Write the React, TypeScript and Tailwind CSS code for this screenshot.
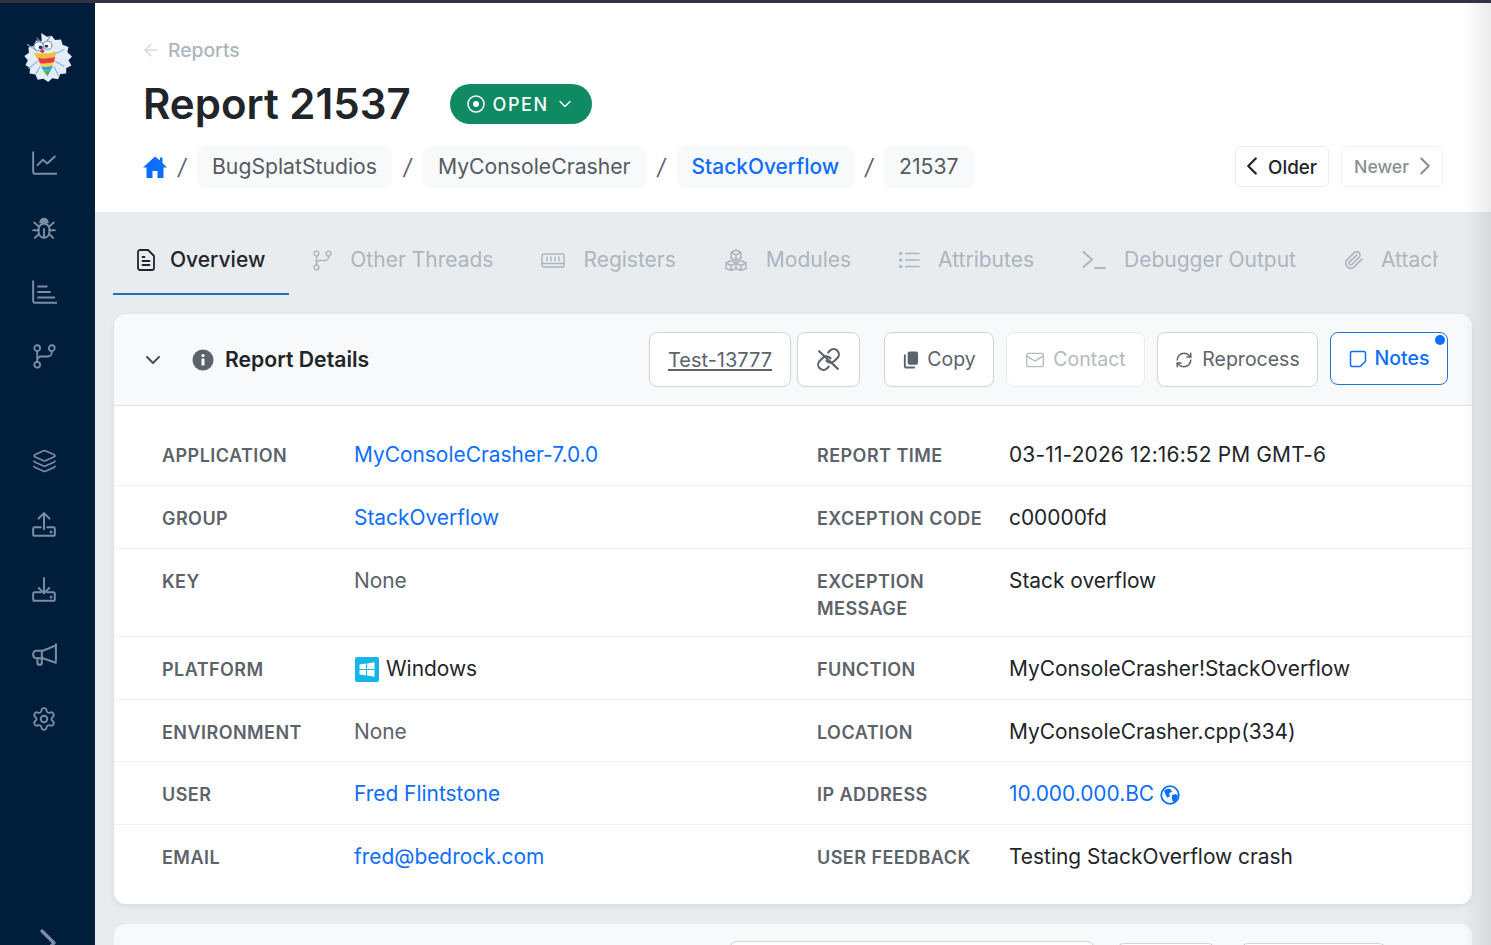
import React from "react";
import { ArrowLeft, ChevronDown, ChevronRight, ChevronLeft, Mail, RefreshCw, Layers, Settings } from "lucide-react";

const Svg = ({ children, size = 24, w, h, box = "0 0 24 24", sw = 1.8, className = "" }: { children: React.ReactNode; size?: number; w?: number; h?: number; box?: string; sw?: number; className?: string }) => (
  <svg width={w ?? size} height={h ?? size} viewBox={box} fill="none" stroke="currentColor" strokeWidth={sw} strokeLinecap="round" strokeLinejoin="round" className={`shrink-0 ${className}`}>
    {children}
  </svg>
);

const Logo = () => (
  <svg width="50" height="50" viewBox="3.500 0.500 43 47" preserveAspectRatio="none">
    <path d="M20 1.500l5 3.500 4-1 3 4 5-.5 1.500 5 5 2-1 5 4 4-3 3.500 2.500 5-4.500 2.500 0 5-5 .5-2 5-5-1-3.500 3.500-4-3-5 1-2-5-5-1 .5-5-4-3 2-4.500-3-4 4-3-.5-5 5-1.500 1.500-5 5 .5z" fill="#e2edf8" />
    <path d="M8 12l8 6M40 17l-8 4M9 35l8-7M40 33l-8-5M15 41l4-8M35 42l-4-9" stroke="#8fb0d8" strokeWidth="1" fill="none" />
    <path d="M16 6l4 4M28 4l-3 5" stroke="#7d93b8" strokeWidth="1" fill="none" />
    <circle cx="18" cy="14" r="4.200" fill="#fff" stroke="#7d93b8" strokeWidth="1" />
    <circle cx="25.500" cy="13" r="3.800" fill="#fff" stroke="#7d93b8" strokeWidth="1" />
    <circle cx="19.500" cy="15" r="1.700" fill="#22335c" />
    <circle cx="24.500" cy="14" r="1.400" fill="#22335c" />
    <circle cx="21" cy="18.500" r="1.700" fill="#e23b3b" />
    <path d="M14 20q10 2 19-1l-1 5q-8 2-16 1z" fill="#f3bd3c" />
    <path d="M17 25q8 1 15-1l-1 5q-6 2-12 1z" fill="#ec3a3a" />
    <path d="M19 30q6 1 12-1l-1 3q-5 2-10 1z" fill="#f8d53c" />
    <path d="M20 33q5 1 10-1l-1.500 4q-4 1-7 0z" fill="#2f9fe0" />
    <path d="M21.500 36.500q3 .8 7-.5l-3 6z" fill="#4cb050" />
  </svg>
);

const BugIcon = () => (
  <Svg size={26} sw={1.8}>
    <path d="M8.500 7a3.500 3.500 0 0 1 7 0z" fill="currentColor" />
    <rect x="7" y="8" width="10" height="13" rx="5" />
    <path d="M12 13v8M3 7l4 3.500M21 7l-4 3.500M2 14h5M22 14h-5M3.500 21l4-3.500M20.500 21l-4-3.500" />
  </Svg>
);

const AxisChart = () => (
  <Svg size={26} sw={1.8}>
    <path d="M2 2v18a2 2 0 0 0 2 2h20" />
    <path d="M6.500 7h8M6.500 12h11M6.500 17h15" />
  </Svg>
);

const GrowthChart = () => (
  <Svg size={26} sw={1.8}>
    <path d="M2 2v18a2 2 0 0 0 2 2h20" />
    <path d="M6 14l5-5 4 3.500 7-6.500" />
  </Svg>
);

const Branch = ({ w = 24, h = 24 }: { w?: number; h?: number }) => (
  <Svg w={w} h={h} box="1 0 22 24" sw={1.7}>
    <circle cx="5" cy="4" r="2.800" />
    <circle cx="5" cy="20" r="2.800" />
    <circle cx="19" cy="4" r="2.800" />
    <path d="M5 6.800v10.400M19 6.800v1.200a4 4 0 0 1-4 4H9a4 4 0 0 0-4 4" />
  </Svg>
);

const Tray = ({ up }: { up: boolean }) => (
  <Svg size={26} sw={1.8}>
    <path d={up ? "M12 1v15M7 6l5-5 5 5" : "M12 1v14M7 10l5 5 5-5"} />
    <path d="M9 14H3.500A1.500 1.500 0 0 0 2 15.500v5A1.500 1.500 0 0 0 3.500 22h17a1.500 1.500 0 0 0 1.500-1.500v-5a1.500 1.500 0 0 0-1.500-1.500H15" />
    <circle cx="18.500" cy="18.500" r=".5" fill="currentColor" />
  </Svg>
);

const Horn = () => (
  <Svg size={26} sw={1.9}>
    <path d="M23 3v15M23 4l-12 5H5a3 3 0 0 0-3 3v1a3 3 0 0 0 3 3h6l12 4" />
    <path d="M6 16v4a2 2 0 0 0 4 0v-4M10 9v7" />
  </Svg>
);

const SideItem = ({ children }: { children: React.ReactNode }) => (
  <div className="flex h-[26px] w-[26px] items-center justify-center text-[#7b8ea5]">{children}</div>
);

const Sidebar = () => (
  <aside className="flex h-full w-[95px] shrink-0 flex-col overflow-hidden bg-[#001d3b]">
    <div className="ml-[22px] mt-[29px] h-[50px]"><Logo /></div>
    <div className="ml-[31px] mt-[68px] flex flex-col gap-[38.500px]">
      <SideItem><GrowthChart /></SideItem>
      <SideItem><BugIcon /></SideItem>
      <SideItem><AxisChart /></SideItem>
      <SideItem><Branch w={23} h={25} /></SideItem>
    </div>
    <div className="mx-[20px] mt-[39px] h-px bg-[#1c3550]" />
    <div className="ml-[31px] mt-[39px] flex flex-col gap-[38.500px]">
      <SideItem><Layers size={28} strokeWidth={1.6} className="ml-px" /></SideItem>
      <SideItem><Tray up /></SideItem>
      <SideItem><Tray up={false} /></SideItem>
      <SideItem><Horn /></SideItem>
      <SideItem><Settings size={26} strokeWidth={1.7} /></SideItem>
    </div>
    <div className="mx-[20px] mt-[38px] h-px bg-[#1c3550]" />
    <div className="mt-[124px] h-px bg-[#10294a]" />
    <div className="ml-[24px] mt-[25px] text-[#7b8ea5]"><ChevronRight size={48} strokeWidth={1.6} /></div>
  </aside>
);

const Crumb = ({ children, blue }: { children: React.ReactNode; blue?: boolean }) => (
  <span className={`flex h-[42px] items-center rounded-lg bg-[#f8f9fa] px-[15px] ${blue ? "text-[20.900px] font-medium text-[#0d6efd]" : "text-[21.200px] text-[#545b62]"}`}>{children}</span>
);
const Sep = ({ w }: { w: string }) => <span className={`text-center text-[22px] italic text-[#5c636a] ${w}`}>/</span>;

const Header = () => (
  <header className="flex h-[209px] shrink-0 flex-col bg-white pl-[48px] pr-[48px]">
    <div className="mt-[36px] flex h-[22px] items-center gap-[7px] text-[19.300px] font-medium text-[#adb5bd]">
      <ArrowLeft size={20} strokeWidth={1.5} className="-ml-[2px] text-[#ced4da]" />
      <span>Reports</span>
    </div>
    <div className="mt-[16px] flex h-[54px] items-center">
      <h1 className="text-[42px] font-semibold leading-none text-[#212529]">Report 21537</h1>
      <button className="ml-[39px] flex h-[40px] w-[142px] items-center justify-center gap-[6px] rounded-full bg-[#0f8a63] text-[18px] font-medium tracking-[1.600px] text-white">
        <svg width="20" height="20" viewBox="0 0 20 20" fill="none" stroke="currentColor" strokeWidth="1.500"><circle cx="10" cy="10" r="8" /><circle cx="10" cy="10" r="3" fill="currentColor" stroke="none" /></svg>
        <span>OPEN</span>
        <ChevronDown size={20} strokeWidth={1.600} />
      </button>
    </div>
    <div className="mt-[15px] flex h-[42px] items-center">
      <svg width="24" height="22" viewBox="0 0 24 22" fill="#0d6efd"><path d="M12 0.500L0 11.500h3.500V22h6v-7h5v7h6V11.500H24L19.500 7V1.500H17v3z" /></svg>
      <Sep w="w-[30px]" />
      <Crumb>BugSplatStudios</Crumb>
      <Sep w="w-[31px]" />
      <Crumb>MyConsoleCrasher</Crumb>
      <Sep w="w-[31px]" />
      <Crumb blue>StackOverflow</Crumb>
      <Sep w="w-[30px]" />
      <Crumb>21537</Crumb>
      <div className="mb-[2px] ml-auto flex items-center gap-[12px]">
        <button className="flex h-[41px] w-[94px] items-center justify-start gap-px rounded-md border border-[#e9ecef] bg-white pl-px text-[18.800px] font-medium text-[#212529]"><ChevronLeft size={30} strokeWidth={1.800} /><span className="mt-[5px]">Older</span></button>
        <button className="flex h-[41px] w-[102px] items-center justify-start gap-px rounded-md border border-[#f1f3f5] bg-white pl-[12px] text-[17.700px] font-medium text-[#8a8f94]"><span className="mt-[2px]">Newer</span><ChevronRight size={30} strokeWidth={1.600} /></button>
      </div>
    </div>
  </header>
);

const TabItem = ({ icon, label, active, gap = "gap-[18px]" }: { icon: React.ReactNode; label: string; active?: boolean; gap?: string }) => (
  <div className={`flex h-[82px] shrink-0 items-center border-b-2 px-[24px] pt-[14px] text-[21px] ${gap} ${active ? "border-[#1f6fc4] font-medium text-[#212529]" : "border-transparent text-[#adb5bd]"}`}>
    {icon}
    <span>{label}</span>
  </div>
);

const Tabs = () => (
  <nav className="ml-[18px] mr-[53px] mt-[1px] flex shrink-0 overflow-hidden">
    <TabItem active label="Overview" gap="gap-[15px]" icon={<Svg w={18} h={22} box="3 1 18 22" sw={1.800}><path d="M6 2h8l6 6v12a2 2 0 0 1-2 2H6a2 2 0 0 1-2-2V4a2 2 0 0 1 2-2z" /><path d="M8.500 13h7M8.500 17h7M8.500 9h2" /></Svg>} />
    <TabItem label="Other Threads" icon={<Branch w={19} h={21} />} />
    <TabItem label="Registers" icon={<Svg w={24} h={15} box="0 0 24 15" sw={1.400}><rect x="1" y="1" width="22" height="13" rx="1.500" /><path d="M1 10.500h22M6 4v3.500M10 4v3.500M14 4v3.500M18 4v3.500" /></Svg>} />
    <TabItem label="Modules" icon={<Svg w={24} h={22} box="0 0 24 22" sw={1.500}><path d="M12 1l5 2.500v5.500l-5 2.500-5-2.500V3.500zM7 11.500l5 2.500v5.500l-5 2-5-2V14zM17 11.500l5 2.500v5.500l-5 2-5-2V14zM7 3.500l5 2.500 5-2.500M12 6v5.500M2 14l5 2.500 5-2.500 5 2.500 5-2.500M7 16.500v5M17 16.500v5" /></Svg>} />
    <TabItem label="Attributes" icon={<Svg w={21} h={18} box="0 0 21 18" sw={1.700}><path d="M7 2.500h13M7 9h13M7 15.500h13" /><path d="M1.500 2.500h.5M1.500 9h.5M1.500 15.500h.5" strokeWidth={3} /></Svg>} />
    <TabItem label="Debugger Output" icon={<Svg w={24} h={20} box="0 0 24 20" sw={2}><path d="M1.500 2l8.500 7.500-8.500 7.500M13 18h10" /></Svg>} />
    <TabItem label="Attachments" gap="gap-[17px]" icon={<Svg w={20} h={22} box="0 0 24 24" sw={2}><path d="m21.440 11.050-9.190 9.190a6 6 0 0 1-8.490-8.490l8.570-8.570A4 4 0 1 1 18 8.840l-8.590 8.570a2 2 0 0 1-2.830-2.830l8.490-8.480" /></Svg>} />
  </nav>
);

const ActionBtn = ({ children, w, tone = "border-[#ced4da] text-[#5c636a]", h = "h-[55px]" }: { children: React.ReactNode; w: string; tone?: string; h?: string }) => (
  <button className={`flex items-center justify-center rounded-lg border bg-white text-[19.500px] ${h} ${w} ${tone}`}>{children}</button>
);

const CardHeader = () => (
  <div className="flex h-[92px] items-center border-b border-[#dee2e6] bg-[#f8f9fa] pl-[27px] pr-[24px]">
    <ChevronDown size={24} strokeWidth={2} className="text-[#495057]" />
    <svg width="22" height="22" viewBox="0 0 22 22" className="ml-[27px]"><circle cx="11" cy="11" r="10.500" fill="#5c636a" /><circle cx="11" cy="6.500" r="1.600" fill="#fff" /><rect x="9.500" y="9.500" width="3" height="7" rx=".6" fill="#fff" /></svg>
    <span className="ml-[11px] mt-px text-[21.200px] font-semibold text-[#212529]">Report Details</span>
    <div className="ml-auto flex items-start">
      <ActionBtn w="w-[142px]"><span className="text-[20px] underline underline-offset-2">Test-13777</span></ActionBtn>
      <ActionBtn w="w-[63px] ml-[6px]">
        <Svg size={25} sw={2}>
          <path d="M10 13a5 5 0 0 0 7.540.54l3-3a5 5 0 0 0-7.070-7.070l-1.720 1.710" />
          <path d="M14 11a5 5 0 0 0-7.540-.54l-3 3a5 5 0 0 0 7.070 7.070l1.710-1.710" />
          <path d="M3 4l18 17" />
        </Svg>
      </ActionBtn>
      <ActionBtn w="w-[110px] ml-[24px] gap-[8px]">
        <svg width="17" height="20" viewBox="0 0 18 20" fill="currentColor"><rect x="6" y="1" width="11" height="14" rx="2" /><path d="M3 5v11a2 2 0 0 0 2 2h8" fill="none" stroke="currentColor" strokeWidth="2" strokeLinecap="round" /></svg>
        <span>Copy</span>
      </ActionBtn>
      <ActionBtn w="w-[139px] ml-[12px] gap-[8px]" tone="border-[#e9ecef] text-[#b5babf]"><Mail size={20} strokeWidth={1.600} /><span>Contact</span></ActionBtn>
      <ActionBtn w="w-[161px] ml-[12px] gap-[9px]"><RefreshCw size={18} strokeWidth={2} /><span>Reprocess</span></ActionBtn>
      <div className="relative ml-[12px]">
        <ActionBtn w="w-[118px] gap-[8px]" h="h-[53px]" tone="border-[#1d72d8] font-medium text-[#0d6efd]">
          <Svg size={18} sw={2}><path d="M4 2h16a2 2 0 0 1 2 2v11l-7 7H4a2 2 0 0 1-2-2V4a2 2 0 0 1 2-2z" /></Svg>
          <span>Notes</span>
        </ActionBtn>
        <span className="absolute right-[3px] top-[3px] h-[10px] w-[10px] rounded-full bg-[#0d6efd]" />
      </div>
    </div>
  </div>
);

const Label = ({ children }: { children: React.ReactNode }) => (
  <div className="mt-px text-[18px] font-semibold uppercase leading-[27px] tracking-[0.450px] text-[#5c636a]">{children}</div>
);
const Val = ({ children, tone = "text-[#212529]" }: { children: React.ReactNode; tone?: string }) => (
  <div className={`flex items-center text-[20.900px] leading-[27px] ${tone}`}>{children}</div>
);

const LINK = "text-[#0d6efd]";
const MUTED = "text-[#5c636a]";
const NUM = "text-[#212529] tracking-[0.180px]";

type RowData = { l1: React.ReactNode; v1: React.ReactNode; t1?: string; l2: React.ReactNode; v2: React.ReactNode; t2?: string; h: string };

const rows: RowData[] = [
  { l1: "Application", v1: "MyConsoleCrasher-7.0.0", t1: LINK, l2: "Report Time", v2: "03-11-2026 12:16:52 PM GMT-6", t2: NUM, h: "h-[63px]" },
  { l1: "Group", v1: "StackOverflow", t1: LINK, l2: "Exception Code", v2: "c00000fd", h: "h-[63px]" },
  { l1: "Key", v1: "None", t1: MUTED, l2: <>Exception<br />Message</>, v2: "Stack overflow", h: "h-[88px]" },
  {
    l1: "Platform",
    v1: (
      <>
        <svg width="24" height="25" viewBox="0 0 24 25" className="ml-px mr-[7px] mt-[2px]"><rect width="24" height="25" rx="2" fill="#13b5ea" /><path d="M4.500 7.500l6.500-1v5.500H4.500zM12 6.400l7.500-1.100v6.700H12zM4.500 13H11v5.500l-6.500-1zM12 13h7.500v6.700L12 18.600z" fill="#fff" /></svg>
        Windows
      </>
    ),
    l2: "Function",
    v2: "MyConsoleCrasher!StackOverflow",
    h: "h-[63px]",
  },
  { l1: "Environment", v1: "None", t1: MUTED, l2: "Location", v2: "MyConsoleCrasher.cpp(334)", h: "h-[62px]" },
  { l1: "User", v1: "Fred Flintstone", t1: LINK, l2: "IP Address", v2: (
    <>
      10.000.000.BC
      <svg width="20" height="20" viewBox="0 0 20 20" className="ml-[6px] mt-[3px]"><circle cx="10" cy="10" r="8.800" fill="#fff" stroke="#0d6efd" strokeWidth="1.800" /><path d="M4 5.500l4-2 3 1 1 2-3 2 1 3-3 1-1.500-3zM12 10l4-1 2 2-2 5-3 1-1-3z" fill="#0d6efd" /></svg>
    </>
  ), t2: LINK, h: "h-[63px]" },
  { l1: "Email", v1: "fred@bedrock.com", t1: LINK, l2: "User Feedback", v2: "Testing StackOverflow crash", h: "h-[63px]" },
];

const Details = () => (
  <div className="bg-white pb-[16px] pt-[17px]">
    {rows.map((r, i) => (
      <div key={i} className={`grid grid-cols-[192px_463px_192px_1fr] items-start pl-[48px] pt-[18px] ${r.h} ${i < rows.length - 1 ? "border-b border-[#f1f3f5]" : ""}`}>
        <Label>{r.l1}</Label>
        <Val tone={r.t1}>{r.v1}</Val>
        <Label>{r.l2}</Label>
        <Val tone={r.t2}>{r.v2}</Val>
      </div>
    ))}
  </div>
);

export default function App() {
  return (
    <div className="relative flex h-[945px] w-full flex-col overflow-hidden bg-[#e9ecef] font-['Inter',sans-serif]">
      <div className="h-[3px] shrink-0 bg-[#33333f]" />
      <div className="flex min-h-0 flex-1">
        <Sidebar />
        <main className="flex min-w-0 flex-1 flex-col overflow-hidden">
          <Header />
          <Tabs />
          <section className="mx-[19px] mt-[19px] shrink-0 overflow-hidden rounded-xl shadow-[0_2px_6px_rgba(0,0,0,0.08)]">
            <CardHeader />
            <Details />
          </section>
          <section className="mx-[19px] mt-[20px] flex h-[60px] shrink-0 items-start justify-end rounded-xl bg-[#f8f9fa] pr-[85px] pt-[17px]">
            <div className="h-[40px] w-[366px] rounded-lg border border-[#ced4da] bg-white" />
            <div className="ml-[21px] mt-[2px] h-[40px] w-[100px] rounded-lg border border-[#ced4da] bg-white" />
            <div className="ml-[24px] mt-[2px] h-[40px] w-[147px] rounded-lg border border-[#ced4da] bg-white" />
          </section>
        </main>
      </div>
      <div className="pointer-events-none absolute bottom-0 right-0 top-[3px] w-[28px] bg-gradient-to-r from-transparent to-[#00000014]" />
    </div>
  );
}
